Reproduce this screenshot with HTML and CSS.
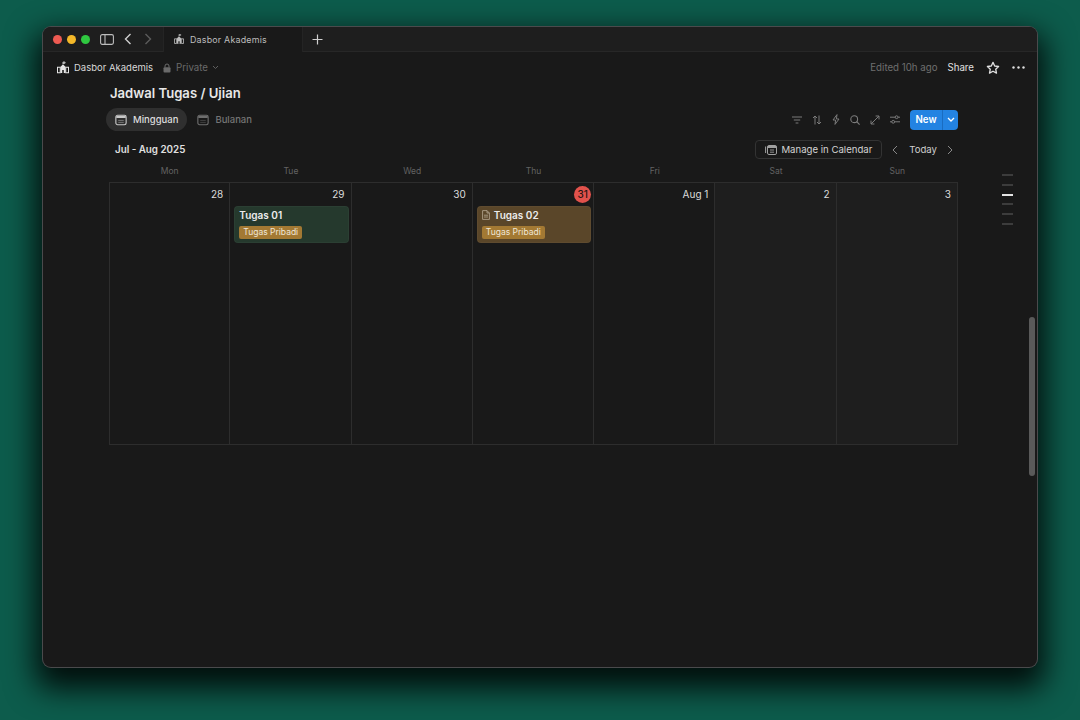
FILE: index.html
```html
<!DOCTYPE html>
<html lang="en">
<head>
    <meta charset="UTF-8">
    <meta name="viewport" content="width=device-width, initial-scale=1.0">
    <title>Dasbor Akademis</title>
    <link rel="stylesheet" href="styles.css">
</head>
<body>
    <svg width="0" height="0" class="defs">
        <symbol id="school" viewBox="0 0 14 14">
            <path d="M7 0.5v2.5M7 0.7h2.4v1.3H7" fill="none" stroke="currentColor" stroke-width="1"/>
            <path d="M4.2 6 7 3.2 9.8 6v7.5H4.2z" fill="currentColor"/>
            <path d="M0.6 6.8h3.2v6.4H0.6zM10.2 6.8h3.2v6.4h-3.2z" fill="none" stroke="currentColor" stroke-width="1.2"/>
            <path d="M6.1 10h1.8v3.5H6.1z" fill="#191919"/>
        </symbol>
        <symbol id="cal" viewBox="0 0 14 14">
            <rect x="1" y="1.5" width="12" height="11" rx="2" fill="none" stroke="currentColor" stroke-width="1.3"/>
            <path d="M1.5 2.2h11v2.6h-11z" fill="currentColor"/>
            <path d="M3.8 7.5h6.4M3.8 9.8h6.4" stroke="currentColor" stroke-width="0.9" opacity="0.6"/>
        </symbol>
    </svg>

    <div class="window">
        <div class="titlebar">
            <div class="traffic">
                <span class="light red"></span>
                <span class="light yellow"></span>
                <span class="light green"></span>
            </div>
            <svg class="sidebar-icon" width="14" height="11" viewBox="0 0 14 11"><rect x="0.6" y="0.6" width="12.8" height="9.8" rx="1.6" fill="none" stroke="currentColor" stroke-width="1.1"/><path d="M5 0.6v9.8" stroke="currentColor" stroke-width="1.1"/></svg>
            <svg class="nav-back" width="8" height="12" viewBox="0 0 8 12"><path d="M6.5 1 1.5 6l5 5" fill="none" stroke="currentColor" stroke-width="1.4"/></svg>
            <svg class="nav-forward" width="8" height="12" viewBox="0 0 8 12"><path d="M1.5 1l5 5-5 5" fill="none" stroke="currentColor" stroke-width="1.4"/></svg>
            <div class="tab">
                <svg width="10" height="10"><use href="#school"/></svg>
                <span>Dasbor Akademis</span>
            </div>
            <svg class="plus" width="11" height="11" viewBox="0 0 11 11"><path d="M5.5 0.5v10M0.5 5.5h10" stroke="currentColor" stroke-width="1.2"/></svg>
        </div>

        <div class="pagebar">
            <svg class="page-icon" width="12" height="13"><use href="#school"/></svg>
            <span class="page-name">Dasbor Akademis</span>
            <svg class="lock" width="8" height="10" viewBox="0 0 8 10"><path d="M2 4.5V3a2 2 0 0 1 4 0v1.5" fill="none" stroke="currentColor" stroke-width="1"/><rect x="0.5" y="4.2" width="7" height="5.2" rx="1" fill="currentColor"/></svg>
            <span class="private">Private</span>
            <svg class="caret" width="7" height="5" viewBox="0 0 7 5"><path d="M1 1l2.5 2.5L6 1" fill="none" stroke="currentColor" stroke-width="1"/></svg>
            <span class="edited">Edited 10h ago</span>
            <span class="share">Share</span>
            <svg class="star" width="14" height="14" viewBox="0 0 14 14"><path d="M7 1.4 8.7 5l3.9.5-2.9 2.7.8 3.9L7 10.2l-3.5 1.9.8-3.9L1.4 5.5 5.3 5z" fill="none" stroke="currentColor" stroke-width="1.3" stroke-linejoin="round"/></svg>
            <svg class="more" width="13" height="3" viewBox="0 0 13 3"><circle cx="1.5" cy="1.5" r="1.2" fill="currentColor"/><circle cx="6.5" cy="1.5" r="1.2" fill="currentColor"/><circle cx="11.5" cy="1.5" r="1.2" fill="currentColor"/></svg>
        </div>

        <div class="content">
            <h1>Jadwal Tugas / Ujian</h1>

            <div class="viewbar">
                <div class="view active">
                    <svg width="12" height="12"><use href="#cal"/></svg>
                    <span>Mingguan</span>
                </div>
                <div class="view">
                    <svg width="12" height="12"><use href="#cal"/></svg>
                    <span>Bulanan</span>
                </div>
                <div class="tools">
                    <svg width="10" height="8" viewBox="0 0 10 8"><path d="M0 1h10M1.8 4h6.4M3.6 7h2.8" stroke="currentColor" stroke-width="1"/></svg>
                    <svg width="10" height="10" viewBox="0 0 10 10"><path d="M3 9.5V1M1 3l2-2 2 2M7 0.5V9M5 7l2 2 2-2" fill="none" stroke="currentColor" stroke-width="1"/></svg>
                    <svg width="8" height="11" viewBox="0 0 8 11"><path d="M5 0.6 1 6h2.6L3 10.4 7 5H4.4z" fill="none" stroke="currentColor" stroke-width="1" stroke-linejoin="round"/></svg>
                    <svg width="10" height="10" viewBox="0 0 10 10"><circle cx="4.2" cy="4.2" r="3.4" fill="none" stroke="currentColor" stroke-width="1.1"/><path d="M6.7 6.7 9.6 9.6" stroke="currentColor" stroke-width="1.2"/></svg>
                    <svg width="10" height="10" viewBox="0 0 10 10"><path d="M1 9 9 1M5.6 1H9v3.4M1 5.6V9h3.4" fill="none" stroke="currentColor" stroke-width="1"/></svg>
                    <svg width="10" height="9" viewBox="0 0 10 9"><path d="M0 2.2h10M0 6.8h10" stroke="currentColor" stroke-width="1"/><circle cx="6.6" cy="2.2" r="1.4" fill="#191919" stroke="currentColor"/><circle cx="3.2" cy="6.8" r="1.4" fill="#191919" stroke="currentColor"/></svg>
                    <div class="new-btn">
                        <span class="new-label">New</span>
                        <span class="new-arrow"><svg width="8" height="5" viewBox="0 0 8 5"><path d="M1 1l3 3 3-3" fill="none" stroke="currentColor" stroke-width="1.3"/></svg></span>
                    </div>
                </div>
            </div>

            <div class="monthbar">
                <span class="month">Jul - Aug 2025</span>
                <div class="manage">
                    <svg width="12" height="11" viewBox="0 0 12 11"><rect x="2.5" y="1.5" width="9" height="9" rx="1.4" fill="none" stroke="currentColor"/><path d="M0.6 2.5V9" stroke="currentColor"/><path d="M2.5 2h9v2h-9z" fill="currentColor"/><path d="M5 6h4M5 8.2h4" stroke="currentColor" stroke-width="0.9"/></svg>
                    <span>Manage in Calendar</span>
                </div>
                <svg class="cal-prev" width="6" height="10" viewBox="0 0 6 10"><path d="M5 1 1 5l4 4" fill="none" stroke="currentColor" stroke-width="1"/></svg>
                <span class="today">Today</span>
                <svg class="cal-next" width="6" height="10" viewBox="0 0 6 10"><path d="M1 1l4 4-4 4" fill="none" stroke="currentColor" stroke-width="1"/></svg>
            </div>

            <div class="weekdays">
                <span>Mon</span><span>Tue</span><span>Wed</span><span>Thu</span><span>Fri</span><span>Sat</span><span>Sun</span>
            </div>

            <div class="calendar">
                <div class="day"><div class="date">28</div></div>
                <div class="day">
                    <div class="date">29</div>
                    <div class="card green-card">
                        <div class="card-title">Tugas 01</div>
                        <span class="tag">Tugas Pribadi</span>
                    </div>
                </div>
                <div class="day"><div class="date">30</div></div>
                <div class="day">
                    <div class="date"><span class="today-num">31</span></div>
                    <div class="card brown-card">
                        <div class="card-title">
                            <svg width="8" height="10" viewBox="0 0 8 10"><path d="M0.6 0.6h4.4l2.4 2.4v6.4H0.6zM5 0.6V3h2.4M2 5.2h4M2 7h4" fill="none" stroke="#b9ab96" stroke-width="0.8"/></svg>
                            Tugas 02
                        </div>
                        <span class="tag">Tugas Pribadi</span>
                    </div>
                </div>
                <div class="day"><div class="date">Aug 1</div></div>
                <div class="day weekend"><div class="date">2</div></div>
                <div class="day weekend"><div class="date">3</div></div>
            </div>
        </div>

        <div class="outline">
            <span></span><span></span><span class="on"></span><span></span><span></span><span></span>
        </div>
        <div class="scrollbar"></div>
    </div>
</body>
</html>
```

FILE: styles.css
```css
* {
    box-sizing: border-box;
}
html, body {
    margin: 0;
    height: 100%;
}
body {
    width: 1080px;
    height: 720px;
    overflow: hidden;
    padding: 27px 43px 0;
    background-color: #0d5c4c;
    font-family: Inter, "Liberation Sans", sans-serif;
    color: #e6e6e6;
}
.defs {
    position: absolute;
}
.window {
    position: relative;
    width: 994px;
    height: 640px;
    background-color: #191919;
    border-radius: 8px;
    box-shadow: 0 0 0 1px #4a4a4c, 0 14px 30px 8px rgba(0, 0, 0, 0.85);
    overflow: hidden;
}

/* title bar */
.titlebar {
    display: flex;
    align-items: center;
    height: 25px;
    background-color: #1e1e1e;
    border-bottom: 1px solid #272727;
    padding-left: 10px;
}
.traffic {
    display: flex;
    gap: 5px;
}
.light {
    width: 9px;
    height: 9px;
    border-radius: 50%;
}
.red { background-color: #ee5a52; }
.yellow { background-color: #f4b829; }
.green { background-color: #2fc840; }
.sidebar-icon {
    margin-left: 10px;
    color: #bdbdbd;
}
.nav-back {
    margin-left: 10px;
    color: #cfcfcf;
}
.nav-forward {
    margin-left: 12px;
    color: #5c5c5c;
}
.tab {
    display: flex;
    align-items: center;
    gap: 6px;
    width: 140px;
    height: 25px;
    margin-left: 11px;
    padding-left: 10px;
    background-color: #191919;
    border-left: 1px solid #242424;
    border-right: 1px solid #242424;
    font-size: 8.9px;
    letter-spacing: 0.2px;
    color: #bdbdbd;
}
.plus {
    margin-left: 9px;
    color: #d0d0d0;
}

/* page bar */
.pagebar {
    display: flex;
    align-items: center;
    height: 31px;
    padding: 0 12px 0 14px;
    font-size: 9.7px;
}
.page-name {
    margin-left: 5px;
    font-size: 9.5px;
    color: #d8d8d8;
}
.lock {
    margin-left: 10px;
    color: #6a6a6a;
}
.private {
    margin-left: 5px;
    color: #6a6a6a;
}
.caret {
    margin-left: 4px;
    color: #5f5f5f;
}
.edited {
    margin-left: auto;
    color: #6f6f6f;
}
.share {
    margin-left: 10px;
    color: #e0e0e0;
}
.star {
    margin-left: 12px;
    color: #e0e0e0;
}
.more {
    margin-left: 12px;
    color: #e0e0e0;
}

/* page content */
.content {
    padding: 0 79px 0 66px;
}
h1 {
    margin: 0;
    height: 22px;
    padding-left: 1px;
    font-size: 13.1px;
    line-height: 21px;
    font-weight: 600;
    color: #e8e8e8;
}
.viewbar {
    display: flex;
    align-items: center;
    height: 23px;
    margin: 3px 0 0 -3px;
}
.view {
    display: flex;
    align-items: center;
    gap: 6px;
    height: 23px;
    padding: 0 9px;
    border-radius: 12px;
    font-size: 9.5px;
    font-weight: 500;
    color: #757575;
    margin-right: 1px;
}
.view svg {
    color: #6e6e6e;
}
.view.active {
    background-color: #2f2f2f;
    color: #dcdcdc;
}
.view.active svg {
    color: #c8c8c8;
}
.tools {
    display: flex;
    align-items: center;
    gap: 10px;
    margin-left: auto;
    color: #7b7b7b;
}
.new-btn {
    display: flex;
    height: 20px;
    background-color: #2383e2;
    border-radius: 4px;
    color: #fff;
    font-size: 9.7px;
    font-weight: 600;
    align-items: center;
}
.new-label {
    width: 32px;
    text-align: center;
    line-height: 20px;
}
.new-arrow {
    display: flex;
    align-items: center;
    justify-content: center;
    width: 16px;
    height: 20px;
    border-left: 1px solid #1a6cc0;
}

.monthbar {
    display: flex;
    align-items: center;
    height: 19px;
    margin-top: 9px;
    padding-left: 6px;
    font-size: 9.6px;
}
.month {
    font-size: 9.8px;
    font-weight: 600;
    color: #e0e0e0;
}
.manage {
    display: flex;
    align-items: center;
    gap: 4px;
    height: 19px;
    margin-left: auto;
    padding: 0 9px;
    border: 1px solid #333;
    border-radius: 4px;
    color: #d4d4d4;
}
.manage svg {
    color: #a0a0a0;
}
.cal-prev {
    margin-left: 10px;
    color: #888;
}
.today {
    margin-left: 11px;
    color: #cfcfcf;
}
.cal-next {
    margin: 0 5px 0 10px;
    color: #888;
}
.weekdays {
    display: grid;
    grid-template-columns: repeat(7, 1fr);
    height: 23px;
    align-items: center;
    text-align: center;
    font-size: 8.5px;
    color: #636363;
}
.calendar {
    display: grid;
    grid-template-columns: repeat(7, 1fr);
    height: 263px;
    border-top: 1px solid #2d2d2d;
    border-bottom: 1px solid #2d2d2d;
}
.day {
    border-right: 1px solid #2d2d2d;
    padding: 0 2px 0 4px;
}
.day:first-child {
    border-left: 1px solid #2d2d2d;
}
.weekend {
    background-color: #1e1e1e;
}
.date {
    display: flex;
    justify-content: flex-end;
    align-items: center;
    height: 22px;
    margin-bottom: 1px;
    padding-right: 4px;
    font-size: 10px;
    color: #dcdcdc;
}
.today-num {
    display: flex;
    align-items: center;
    justify-content: center;
    width: 17px;
    height: 17px;
    margin-right: -4px;
    border-radius: 50%;
    background-color: #e2524c;
    color: #2a1512;
    font-weight: 500;
}
.card {
    height: 37px;
    border-radius: 4px;
    padding: 0 4px;
    border: 1px solid rgba(255, 255, 255, 0.03);
}
.green-card {
    background-color: #25392d;
}
.brown-card {
    background-color: #5a4629;
}
.card-title {
    display: flex;
    align-items: center;
    gap: 4px;
    height: 15px;
    font-size: 10px;
    font-weight: 600;
    color: #ececec;
}
.tag {
    display: block;
    width: fit-content;
    height: 13px;
    margin-top: 4px;
    padding: 0 4px;
    border-radius: 2px;
    background-color: #a37933;
    color: #efe6d6;
    font-size: 8.5px;
    line-height: 13px;
}

/* overlays */
.outline {
    position: absolute;
    top: 147px;
    left: 959px;
    display: flex;
    flex-direction: column;
    gap: 7.8px;
}
.outline span {
    width: 11px;
    height: 2px;
    background-color: #3c3c3c;
}
.outline .on {
    background-color: #e4e4e4;
}
.scrollbar {
    position: absolute;
    top: 290px;
    left: 986px;
    width: 6px;
    height: 159px;
    border-radius: 3px;
    background-color: #5a5a5a;
}
```
